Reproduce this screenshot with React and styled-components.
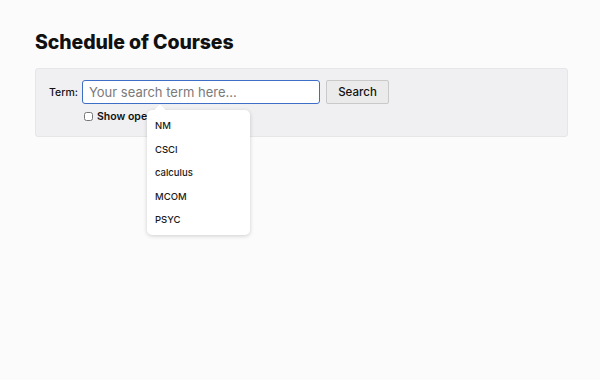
import React from "react";
import styled, { createGlobalStyle } from "styled-components";

const GlobalStyle = createGlobalStyle`
  body {
    margin: 0;
    background: #fbfbfc;
    font-family: "Inter", "Noto Sans", sans-serif;
    color: #111;
  }
`;

const Page = styled.div`
  width: 600px;
  height: 380px;
  padding: 28px 32px 0 35px;
  box-sizing: border-box;
`;

const Title = styled.h1`
  margin: 0 0 12px;
  font-size: 19.5px;
  font-weight: 800;
  letter-spacing: -0.1px;
  line-height: 28px;
`;

const Panel = styled.div`
  background: #f0eff1;
  border: 1px solid #e6e5e8;
  border-radius: 3px;
  padding: 11px 14px 13px 13px;
  display: flex;
  flex-direction: column;
  gap: 6px;
`;

const Row = styled.div`
  display: flex;
  align-items: center;
  gap: 6px;
`;

const Label = styled.label`
  font-size: 10.5px;
  font-weight: 500;
  width: 27px;
`;

const Field = styled.div`
  position: relative;
`;

const Input = styled.input`
  width: 238px;
  height: 24px;
  box-sizing: border-box;
  border: 1px solid #3d6fc6;
  border-radius: 3px;
  background: #fff;
  padding: 0 6px;
  font-family: inherit;
  font-size: 13px;
  outline: none;
  &::placeholder {
    color: #7a7a7a;
  }
`;

const Button = styled.button`
  height: 24px;
  width: 63px;
  border: 1px solid #c9c9c9;
  border-radius: 2px;
  background: #ebebeb;
  font-family: inherit;
  font-size: 11.5px;
  font-weight: 500;
  color: #111;
`;

const Check = styled.label`
  display: flex;
  align-items: center;
  gap: 4px;
  margin-left: 35px;
  font-size: 10.5px;
  font-weight: 600;
  input {
    margin: 0;
    width: 9px;
    height: 9px;
  }
`;

const Menu = styled.ul`
  position: absolute;
  top: 30px;
  left: 65px;
  width: 103px;
  margin: 0;
  padding: 4px 0 3px;
  list-style: none;
  background: #fff;
  border-radius: 5px;
  box-shadow: 0 1px 4px rgba(0, 0, 0, 0.18);
  z-index: 2;
  &::before {
    content: "";
    position: absolute;
    top: -4px;
    left: 9px;
    width: 8px;
    height: 8px;
    background: #fff;
    transform: rotate(45deg);
    border-radius: 1px;
  }
`;

const Item = styled.li`
  position: relative;
  height: 23.5px;
  line-height: 23.5px;
  padding-left: 8px;
  font-size: 9.5px;
  font-weight: 500;
  color: #1a1a1a;
`;

const options = ["NM", "CSCI", "calculus", "MCOM", "PSYC"];

export default function App() {
  return (
    <>
      <GlobalStyle />
      <Page>
        <Title>Schedule of Courses</Title>
        <Panel>
          <Row>
            <Label>Term:</Label>
            <Field>
              <Input placeholder="Your search term here..." />
              <Menu>
                {options.map((o) => (
                  <Item key={o}>{o}</Item>
                ))}
              </Menu>
            </Field>
            <Button>Search</Button>
          </Row>
          <Check>
            <input type="checkbox" />
            Show open sections only
          </Check>
        </Panel>
      </Page>
    </>
  );
}
